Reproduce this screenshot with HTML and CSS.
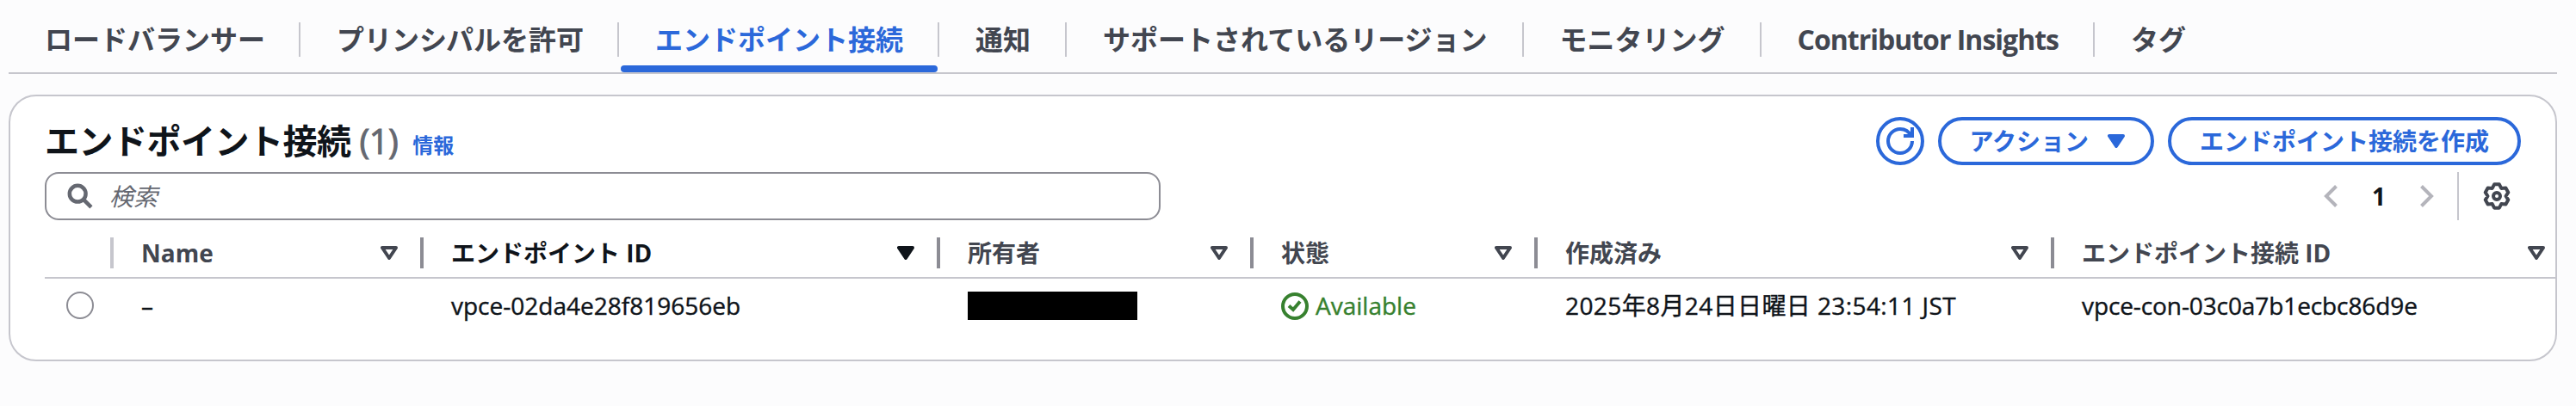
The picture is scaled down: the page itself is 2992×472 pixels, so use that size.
FILE: index.html
```html
<!DOCTYPE html>
<html lang="ja">
<head>
    <meta charset="UTF-8">
    <meta name="viewport" content="width=device-width, initial-scale=1.0">
    <title>エンドポイント接続</title>
    <link rel="stylesheet" href="styles.css">
</head>
<body>

<nav class="tabs">
    <a class="tab">ロードバランサー</a>
    <a class="tab">プリンシパルを許可</a>
    <a class="tab active">エンドポイント接続</a>
    <a class="tab">通知</a>
    <a class="tab">サポートされているリージョン</a>
    <a class="tab">モニタリング</a>
    <a class="tab latin">Contributor Insights</a>
    <a class="tab">タグ</a>
</nav>

<section class="card">
    <div class="card-header">
        <h2>エンドポイント接続 <span class="count">(1)</span></h2>
        <a class="info">情報</a>
        <div class="actions">
            <button class="btn btn-icon" aria-label="更新">
                <svg viewBox="0 0 16 16"><path d="M15 8c0 3.870-3.130 7-7 7s-7-3.130-7-7 3.130-7 7-7c2.790 0 5.200 1.630 6.330 4"/><path d="M10 5h5V0"/></svg>
            </button>
            <button class="btn">アクション
                <svg class="caret solid" viewBox="0 0 20 16"><path d="M2 2h16l-8 12z"/></svg>
            </button>
            <button class="btn">エンドポイント接続を作成</button>
        </div>
    </div>

    <div class="tools">
        <div class="search">
            <svg viewBox="0 0 16 16"><circle cx="6.500" cy="6.500" r="5"/><path d="M10.200 10.200l4.700 4.700"/></svg>
            <span>検索</span>
        </div>
        <div class="pagination">
            <svg class="arrow" viewBox="0 0 16 26"><path d="M14.500 1.500L3 13l11.500 11.500"/></svg>
            <b>1</b>
            <svg class="arrow" viewBox="0 0 16 26"><path d="M1.500 1.500L13 13 1.500 24.500"/></svg>
        </div>
        <div class="settings">
            <svg viewBox="0 0 32 32"><path d="M13.100 2.300h5.800l2.350 4.600 5.150-.3 2.900 5.100-2.800 4.300 2.800 4.300-2.900 5.100-5.150-.3-2.350 4.600h-5.800l-2.350-4.600-5.150.3-2.900-5.100L5.500 16l-2.800-4.300 2.900-5.100 5.150.3z"/><circle cx="16" cy="16" r="4"/></svg>
        </div>
    </div>

    <div class="table">
        <div class="row head">
            <div class="cell first"></div>
            <div class="cell">Name <svg class="caret" viewBox="0 0 20 16"><path d="M2 2h16l-8 12z"/></svg></div>
            <div class="cell sorted">エンドポイント ID <svg class="caret solid" viewBox="0 0 20 16"><path d="M2 2h16l-8 12z"/></svg></div>
            <div class="cell">所有者 <svg class="caret" viewBox="0 0 20 16"><path d="M2 2h16l-8 12z"/></svg></div>
            <div class="cell">状態 <svg class="caret" viewBox="0 0 20 16"><path d="M2 2h16l-8 12z"/></svg></div>
            <div class="cell">作成済み <svg class="caret" viewBox="0 0 20 16"><path d="M2 2h16l-8 12z"/></svg></div>
            <div class="cell">エンドポイント接続 ID <svg class="caret" viewBox="0 0 20 16"><path d="M2 2h16l-8 12z"/></svg></div>
        </div>
        <div class="row body">
            <div class="cell first"><span class="radio"></span></div>
            <div class="cell">–</div>
            <div class="cell">vpce-02da4e28f819656eb</div>
            <div class="cell"><span class="masked"></span></div>
            <div class="cell status">
                <svg viewBox="0 0 32 32"><circle cx="16" cy="16" r="14"/><path d="M9 15.500l5 4.500 8-9.500"/></svg>
                <span>Available</span>
            </div>
            <div class="cell date">2025年8月24日日曜日 23:54:11 JST</div>
            <div class="cell connection">vpce-con-03c0a7b1ecbc86d9e</div>
        </div>
    </div>
</section>

</body>
</html>
```
FILE: styles.css
```css
* {
    box-sizing: border-box;
}
body {
    margin: 0;
    padding: 0 22px 0 10px;
    background-color: #fcfcfd;
    color: #0f141a;
    font-family: "Open Sans", "Noto Sans CJK JP", sans-serif;
    font-size: 28px;
    line-height: 40px;
}
svg {
    display: block;
    flex: none;
    fill: none;
    stroke: currentColor;
}

/* タブ */
.tabs {
    display: flex;
    height: 86px;
    border-bottom: 2px solid #c6c6cd;
}
.tab {
    position: relative;
    height: 40px;
    margin-top: 26px;
    padding: 0 40px 0 42px;
    border-right: 2px solid #c6c6cd;
    color: #424650;
    font-size: 32px;
    font-weight: 700;
    white-space: nowrap;
}
.tab:first-child,
.tab:nth-child(2) {
    padding-right: 39px;
}
.tab.latin {
    letter-spacing: -1px;
}
.tab:last-child {
    border-right: none;
}
.tab.active {
    color: #2b68da;
}
.tab.active::after {
    content: "";
    position: absolute;
    left: 2px;
    right: 0;
    bottom: -18px;
    height: 8px;
    border-radius: 4px;
    background-color: #2b68da;
}

/* コンテナ */
.card {
    height: 310px;
    margin-top: 24px;
    border: 2px solid #c6c6cd;
    border-radius: 32px;
    background-color: #fff;
    overflow: hidden;
}
.card-header {
    display: flex;
    align-items: center;
    height: 88px;
    padding: 24px 40px 8px;
}
h2 {
    margin: 0;
    font-size: 40px;
    font-weight: 700;
    line-height: 48px;
    letter-spacing: -0.5px;
}
.count {
    color: #656871;
    font-weight: 400;
    -webkit-text-stroke: 1px currentColor;
}
.info {
    margin: 10px 0 0 17px;
    color: #2b68da;
    font-size: 24px;
    font-weight: 700;
}
.actions {
    display: flex;
    gap: 16px;
    margin-left: auto;
}
.btn {
    display: flex;
    align-items: center;
    height: 56px;
    padding: 0 32px;
    border: 4px solid #2b68da;
    border-radius: 28px;
    background-color: #fff;
    color: #2b68da;
    font: inherit;
    font-weight: 700;
}
.btn .caret {
    margin-left: 22px;
    margin-right: -2px;
}
.btn:last-child {
    padding: 0 33px;
}
.btn-icon {
    width: 56px;
    padding: 0 8px;
}
.btn-icon svg {
    width: 32px;
    height: 32px;
    stroke-width: 2;
}

/* 検索とページ送り */
.tools {
    display: flex;
    align-items: center;
    height: 56px;
    padding: 0 52px 0 40px;
}
.search {
    display: flex;
    align-items: center;
    gap: 19px;
    width: 1296px;
    height: 56px;
    padding-left: 24px;
    border: 2px solid #8c8c94;
    border-radius: 16px;
    color: #656871;
    font-style: italic;
}
.search svg {
    width: 30px;
    height: 30px;
    stroke-width: 2.4;
}
.pagination {
    display: flex;
    align-items: center;
    gap: 40px;
    margin-left: auto;
    padding-right: 27px;
}
.arrow {
    width: 16px;
    height: 26px;
    stroke: #b4b4bb;
    stroke-width: 4;
}
.settings {
    display: flex;
    align-items: center;
    height: 56px;
    padding-left: 28px;
    border-left: 2px solid #c6c6cd;
    color: #424650;
}
.settings svg {
    width: 32px;
    height: 32px;
    stroke-width: 4;
    stroke-linejoin: round;
}

/* テーブル */
.table {
    margin-left: 40px;
}
.row {
    display: grid;
    grid-template-columns: 80px 360px 600px 364px 330px 600px 600px;
    height: 64px;
    align-items: center;
}
.cell {
    display: flex;
    align-items: center;
    padding-left: 32px;
    white-space: nowrap;
}
.head {
    height: 68px;
    padding: 20px 0 10px;
    border-bottom: 2px solid #c6c6cd;
}
.head .cell {
    justify-content: space-between;
    height: 36px;
    padding-right: 26px;
    border-right: 4px solid #8c8c94;
    color: #424650;
    font-weight: 700;
}
.head .first {
    border-color: #c6c6cd;
}
.head .sorted {
    color: #0f141a;
}
.body {
    -webkit-text-stroke: 0.4px currentColor;
}
.body .cell,
.status span {
    padding-bottom: 2px;
}
.caret {
    width: 20px;
    height: 16px;
    stroke-width: 4;
    stroke-linejoin: round;
}
.caret.solid {
    fill: currentColor;
}
.cell.first {
    padding-left: 25px;
}
.radio {
    width: 32px;
    height: 32px;
    border: 2px solid #8c8c94;
    border-radius: 50%;
}
.masked {
    width: 197px;
    height: 33px;
    background-color: #000;
}
.date {
    letter-spacing: 0.4px;
}
.connection {
    letter-spacing: -0.1px;
}
.body .status {
    gap: 8px;
    padding-bottom: 0;
    color: #37812f;
}
.status svg {
    width: 32px;
    height: 32px;
    stroke-width: 4;
}
```
